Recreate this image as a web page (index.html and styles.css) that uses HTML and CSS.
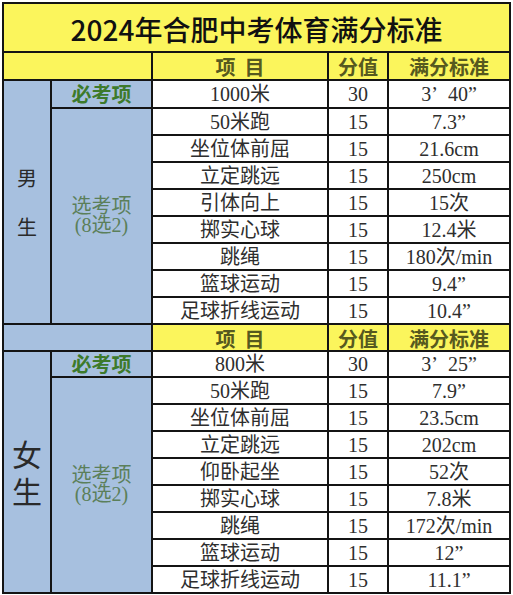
FILE: index.html
```html
<!DOCTYPE html>
<html lang="zh-CN">
<head>
<meta charset="utf-8">
<title>2024年合肥中考体育满分标准</title>
<link rel="stylesheet" href="styles.css">
</head>
<body>
<table class="sheet">
  <colgroup>
    <col class="c-sex">
    <col class="c-cat">
    <col class="c-item">
    <col class="c-score">
    <col class="c-std">
  </colgroup>
  <tr class="r-title"><td colspan="5" class="title">2024年合肥中考体育满分标准</td></tr>
  <tr class="r-head"><td colspan="2" class="yellow"></td><td class="head">项&nbsp;&nbsp;目</td><td class="head">分值</td><td class="head">满分标准</td></tr>
  <tr class="r-must"><td rowspan="9" class="sex blue">男<br>生</td><td class="must blue">必考项</td><td>1000米</td><td>30</td><td>3’&nbsp;&nbsp;40”</td></tr>
  <tr class="r-data"><td rowspan="8" class="opt blue">选考项<br>(8选2)</td><td>50米跑</td><td>15</td><td>7.3”</td></tr>
  <tr class="r-data"><td>坐位体前屈</td><td>15</td><td>21.6cm</td></tr>
  <tr class="r-data"><td>立定跳远</td><td>15</td><td>250cm</td></tr>
  <tr class="r-data"><td>引体向上</td><td>15</td><td>15次</td></tr>
  <tr class="r-data"><td>掷实心球</td><td>15</td><td>12.4米</td></tr>
  <tr class="r-data"><td>跳绳</td><td>15</td><td>180次/min</td></tr>
  <tr class="r-data"><td>篮球运动</td><td>15</td><td>9.4”</td></tr>
  <tr class="r-data"><td>足球折线运动</td><td>15</td><td>10.4”</td></tr>
  <tr class="r-head2"><td colspan="2" class="blue"></td><td class="head">项&nbsp;&nbsp;目</td><td class="head">分值</td><td class="head">满分标准</td></tr>
  <tr class="r-must2"><td rowspan="9" class="sex sex-f blue">女<br>生</td><td class="must blue">必考项</td><td>800米</td><td>30</td><td>3’&nbsp;&nbsp;25”</td></tr>
  <tr class="r-data"><td rowspan="8" class="opt blue">选考项<br>(8选2)</td><td>50米跑</td><td>15</td><td>7.9”</td></tr>
  <tr class="r-data"><td>坐位体前屈</td><td>15</td><td>23.5cm</td></tr>
  <tr class="r-data"><td>立定跳远</td><td>15</td><td>202cm</td></tr>
  <tr class="r-data"><td>仰卧起坐</td><td>15</td><td>52次</td></tr>
  <tr class="r-data"><td>掷实心球</td><td>15</td><td>7.8米</td></tr>
  <tr class="r-data"><td>跳绳</td><td>15</td><td>172次/min</td></tr>
  <tr class="r-data"><td>篮球运动</td><td>15</td><td>12”</td></tr>
  <tr class="r-data"><td>足球折线运动</td><td>15</td><td>11.1”</td></tr>
</table>
</body>
</html>
```

FILE: styles.css
```css
html, body {
  margin: 0;
  padding: 0;
  background: #ffffff;
}

.sheet {
  margin: 2px 0 0 2px;
  border-collapse: collapse;
  table-layout: fixed;
  width: 509px;
  border: 2px solid #141414;
  font-family: "Liberation Serif", "Noto Sans CJK SC", serif;
  font-size: 20px;
  color: #2e2e2e;
}

.c-sex { width: 48px; }
.c-cat { width: 101px; }
.c-item { width: 176px; }
.c-score { width: 60px; }
.c-std { width: 122px; }

.sheet td {
  border: 2px solid #141414;
  padding: 0;
  text-align: center;
  vertical-align: middle;
  white-space: nowrap;
  line-height: 1;
  background: #ffffff;
}

.r-title { height: 49px; }
.r-head { height: 28px; }
.r-must { height: 28px; }
.r-data { height: 27px; }
.r-head2 { height: 27px; }
.r-must2 { height: 26px; }

.sheet td.title {
  background: #fbf55c;
  font-family: "Noto Sans CJK SC", sans-serif;
  font-weight: 500;
  font-size: 28px;
  color: #111111;
  padding-top: 3px;
}

.sheet td.yellow { background: #fbf55c; }
.sheet td.blue { background: #a7c0df; }

.sheet td.head {
  background: #fbf55c;
  font-family: "Noto Sans CJK SC", sans-serif;
  font-weight: 700;
  font-size: 20px;
  color: #56591f;
  padding-top: 2px;
}

.sheet td.must {
  font-family: "Noto Sans CJK SC", sans-serif;
  font-weight: 700;
  color: #3d7a2b;
}

.sheet td.opt {
  color: #5b7f5a;
  line-height: 19px;
}

.sheet td.sex {
  font-family: "Noto Sans CJK SC", sans-serif;
  color: #2a2a2a;
  line-height: 49px;
}

.sheet td.sex-f {
  font-size: 30px;
  line-height: 37px;
}
```
